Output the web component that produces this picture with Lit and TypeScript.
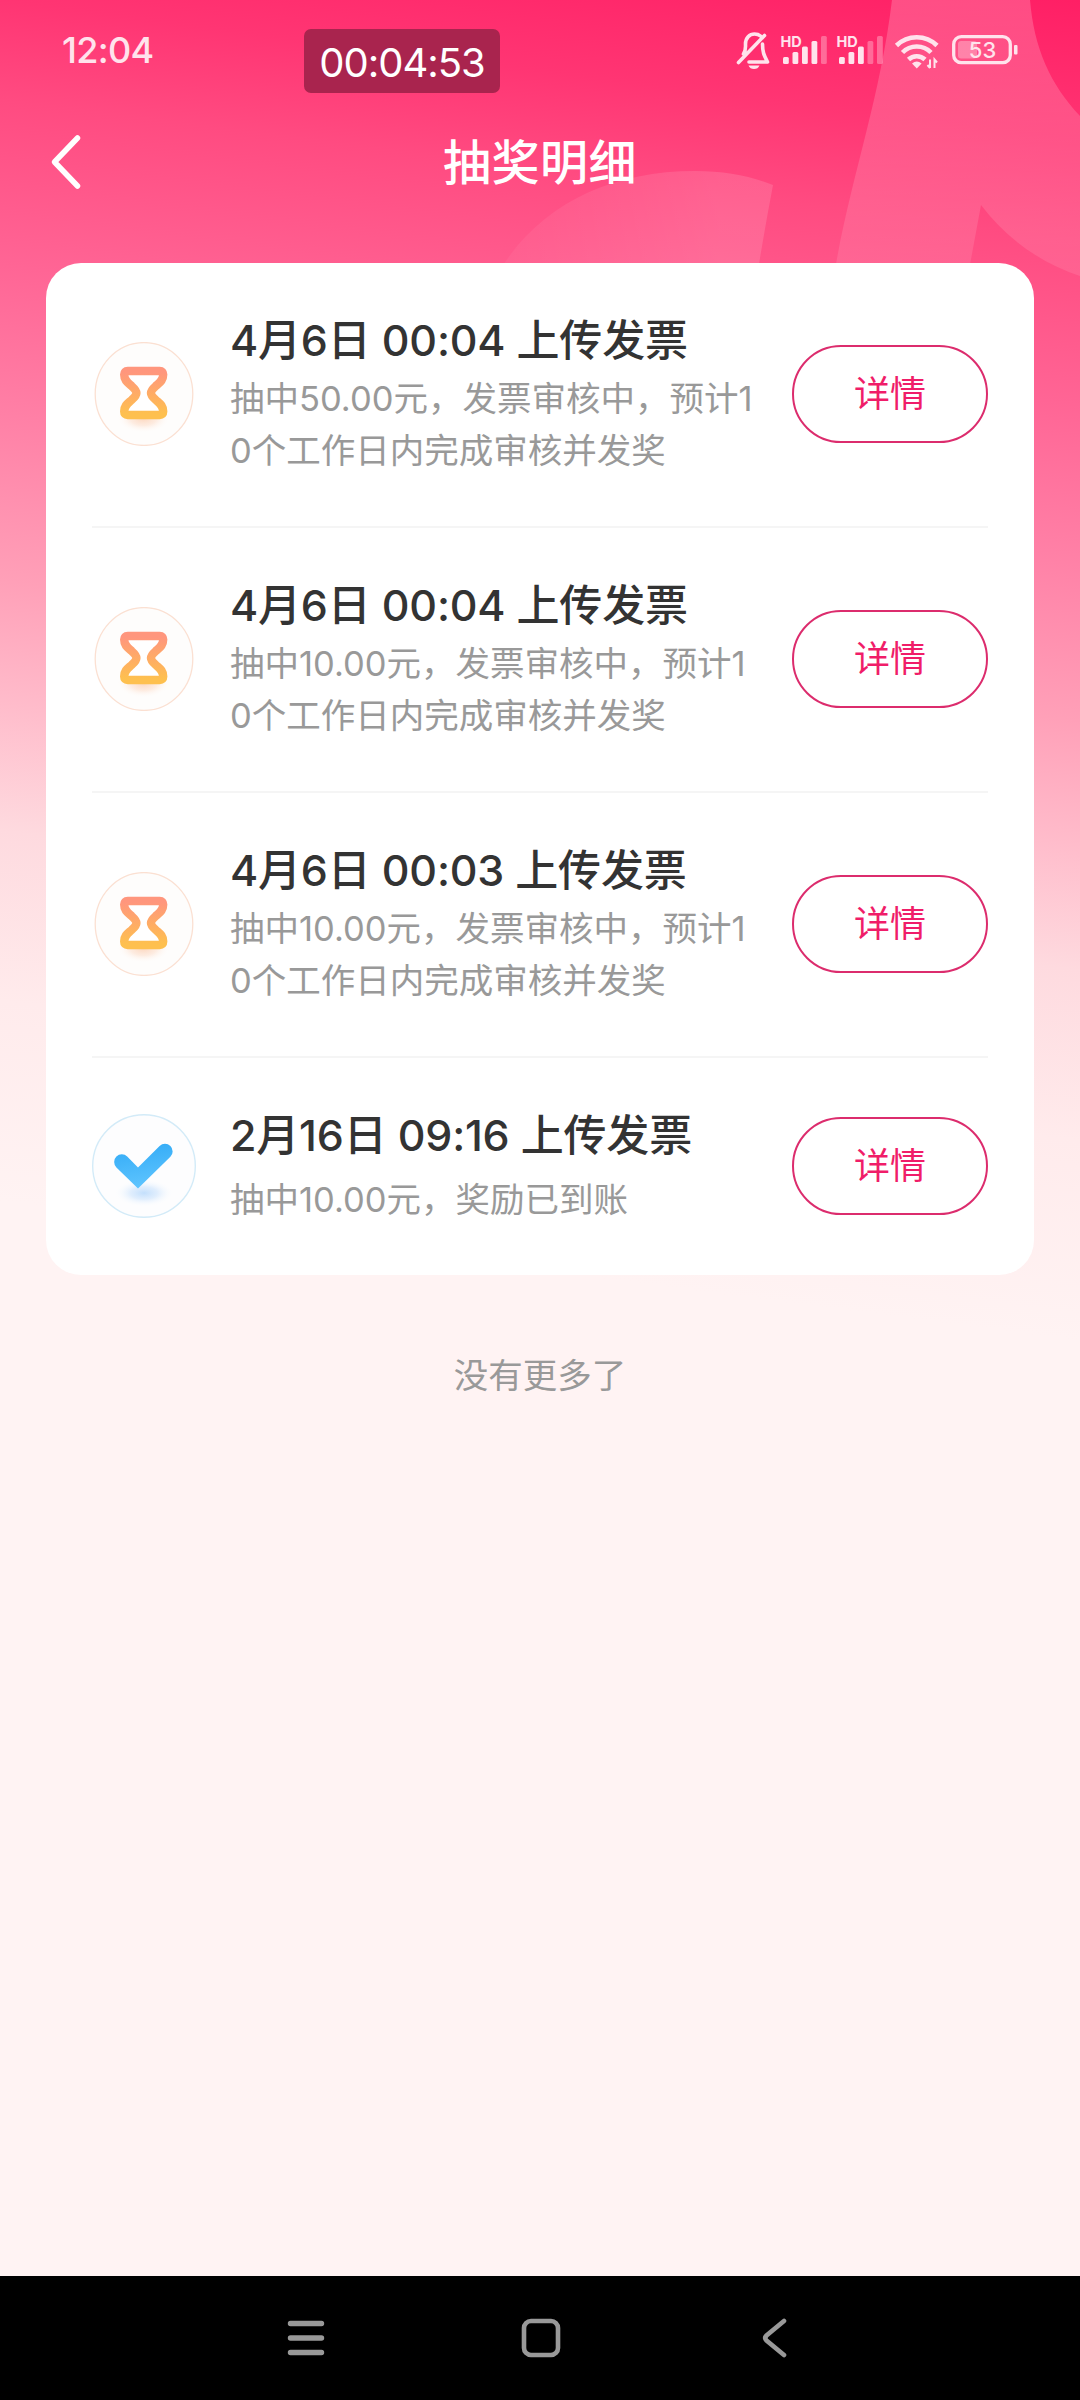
import { LitElement, html, css, svg } from "lit";
import { customElement, property } from "lit/decorators.js";

interface Entry {
  time: string;
  lines: string[];
  status: "pending" | "done";
}

const ENTRIES: Entry[] = [
  { time: "4月6日 00:04 上传发票", lines: ["抽中50.00元，发票审核中，预计1", "0个工作日内完成审核并发奖"], status: "pending" },
  { time: "4月6日 00:04 上传发票", lines: ["抽中10.00元，发票审核中，预计1", "0个工作日内完成审核并发奖"], status: "pending" },
  { time: "4月6日 00:03 上传发票", lines: ["抽中10.00元，发票审核中，预计1", "0个工作日内完成审核并发奖"], status: "pending" },
  { time: "2月16日 09:16 上传发票", lines: ["抽中10.00元，奖励已到账"], status: "done" },
];

@customElement("status-badge")
class StatusBadge extends LitElement {
  @property() kind = "pending";

  static styles = css`
    :host { display: block; width: 104px; height: 104px; }
    svg { display: block; }
  `;

  render() {
    return this.kind === "done"
      ? html`<svg width="104" height="104" viewBox="0 0 104 104">
          <defs>
            <linearGradient id="g" x1="0.3" y1="0" x2="0.5" y2="1">
              <stop offset="0" stop-color="#33abf6" /><stop offset="1" stop-color="#5fc5ff" />
            </linearGradient>
            <radialGradient id="s"><stop offset="0" stop-color="#c3dffc" /><stop offset="0.45" stop-color="#d9eafd" stop-opacity=".8" /><stop offset="1" stop-color="#fff" stop-opacity="0" /></radialGradient>
          </defs>
          <circle cx="52" cy="52" r="51.3" fill="#fdfdfe" stroke="#d3ebf8" stroke-width="1.4" />
          <ellipse cx="52" cy="79" rx="30" ry="14" fill="url(#s)" />
          <path d="M24.4 53.4a7.6 7.6 0 0 1 10.800-10.800L46 53.600 67.600 32a7.600 7.600 0 0 1 10.800 10.800L46 74.600z" fill="url(#g)" />
        </svg>`
      : html`<svg width="104" height="104" viewBox="0 0 104 104">
          <defs>
            <linearGradient id="g" gradientUnits="userSpaceOnUse" x1="0" y1="25" x2="0" y2="77">
              <stop offset="0.1" stop-color="#ff967d" /><stop offset="0.9" stop-color="#fec04f" />
            </linearGradient>
            <radialGradient id="s"><stop offset="0" stop-color="#fcd6bd" /><stop offset="0.5" stop-color="#fde6d8" stop-opacity=".75" /><stop offset="1" stop-color="#fff" stop-opacity="0" /></radialGradient>
          </defs>
          <ellipse cx="52" cy="52" rx="48.8" ry="51.4" fill="#fefdfc" stroke="#fbe0d2" stroke-width="1.3" />
          <ellipse cx="51.5" cy="76" rx="27" ry="15" fill="url(#s)" />
          <path d="M35.700 29H67.700Q71.200 29 71.200 32.500C71.200 39 67 41 63.500 44.300 57.500 49.500 57.500 52.500 63.500 57.700 67 61 71.200 63 71.200 69.500Q71.200 73 67.700 73H35.700Q32.200 73 32.200 69.500C32.200 63 36.400 61 39.900 57.700 45.900 52.500 45.900 49.500 39.900 44.300 36.400 41 32.200 39 32.200 32.500Q32.200 29 35.700 29z"
            fill="#fff" stroke="url(#g)" stroke-width="8.400" stroke-linejoin="round" />
        </svg>`;
  }
}

@customElement("app-root")
export class AppRoot extends LitElement {
  static styles = css`
    :host {
      display: block;
      font-family: Inter, "Noto Sans CJK SC", sans-serif;
      color: #333;
    }
    .screen {
      position: relative;
      display: flex;
      flex-direction: column;
      width: 1080px;
      height: 2400px;
      overflow: hidden;
      background: #fff3f3;
    }
    .backdrop { position: absolute; left: 0; top: 0; }
    .status {
      position: relative;
      display: flex;
      align-items: center;
      height: 100px;
      padding: 0 60px 0 62px;
      box-sizing: border-box;
      color: #ffe3ec;
    }
    .clock { font-size: 36px; font-weight: 500; line-height: 44px; width: 242px; letter-spacing: -0.7px; }
    .timer {
      display: flex;
      align-items: center;
      justify-content: center;
      width: 196px;
      height: 64px;
      margin-top: 22px;
      box-sizing: border-box;
      padding-top: 2px;
      border-radius: 7px;
      background: #a9244e;
      color: #fff;
      font-size: 40px;
      letter-spacing: -1px;
    }
    .indicators { margin-left: auto; display: block; }
    .nav {
      position: relative;
      display: grid;
      grid-template-columns: 96px 1fr 96px;
      align-items: center;
      height: 124px;
      color: #fff;
    }
    .nav svg { display: block; margin-left: 48px; }
    .nav h1 { margin: 2px 0 0; text-align: center; font-size: 48px; font-weight: 500; line-height: 60px; letter-spacing: 0.5px; }
    .card {
      position: relative;
      margin: 39px 46px 0;
      padding: 0 46px;
      border-radius: 35px;
      background: #fff;
      height: 1012px;
      box-sizing: border-box;
    }
    .row {
      display: grid;
      grid-template-columns: 104px 1fr 196px;
      column-gap: 34px;
      align-items: center;
      height: 265px;
      padding-bottom: 2px;
      box-sizing: border-box;
      border-bottom: 2px solid #f5f5f5;
    }
    .row.done { height: 216px; border-bottom: 0; padding: 0; }
    .text { align-self: start; white-space: nowrap; padding-top: 49px; }
    .title { font-size: 43px; font-weight: 450; line-height: 56px; color: #333; letter-spacing: -0.2px; }
    .desc { font-size: 34.500px; line-height: 52px; color: #999; margin-top: 5px; }
    .done .desc { margin-top: 11px; }
    .detail {
      box-sizing: border-box;
      width: 196px;
      height: 98px;
      padding: 0;
      border: 2px solid #dc2c6d;
      border-radius: 49px;
      background: #fff;
      color: #f01d69;
      font: 400 36px/44px Inter, "Noto Sans CJK SC", sans-serif;
    }
    .end { position: relative; margin-top: 75px; text-align: center; font-size: 34.500px; line-height: 52px; color: #999; }
    .system {
      position: relative;
      margin-top: auto;
      height: 124px;
      display: flex;
      align-items: center;
      justify-content: space-between;
      padding: 0 292px 0 286px;
      background: #000;
    }
    .home { margin-right: 5px; }
    .hd { font: 700 14.500px Inter, sans-serif; }
    .pct { font: 500 22px Inter, sans-serif; }
  `;

  private backdrop() {
    return html`<svg class="backdrop" width="1080" height="1400" viewBox="0 0 1080 1400">
      <defs>
        <linearGradient id="v" gradientUnits="userSpaceOnUse" x1="0" y1="-140" x2="-174" y2="1200">
          <stop offset="0" stop-color="#ff1f65" />
          <stop offset=".103" stop-color="#ff3573" />
          <stop offset=".176" stop-color="#ff4b81" />
          <stop offset=".297" stop-color="#ff6595" />
          <stop offset=".407" stop-color="#ff80a6" />
          <stop offset=".529" stop-color="#ffa0b8" />
          <stop offset=".62" stop-color="#ffbccb" />
          <stop offset=".712" stop-color="#fedadf" />
          <stop offset=".837" stop-color="#ffebec" />
          <stop offset=".984" stop-color="#fff3f3" />
        </linearGradient>
        <linearGradient id="o" gradientUnits="userSpaceOnUse" x1="0" y1="0" x2="0" y2="270">
          <stop offset="0" stop-color="#fff" stop-opacity=".2" />
          <stop offset="1" stop-color="#fff" stop-opacity=".1" />
        </linearGradient>
        <linearGradient id="b" gradientUnits="userSpaceOnUse" x1="500" y1="0" x2="720" y2="0">
          <stop offset="0" stop-color="#fff" stop-opacity=".04" />
          <stop offset="1" stop-color="#fff" stop-opacity=".13" />
        </linearGradient>
      </defs>
      <rect width="1080" height="1400" fill="url(#v)" />
      <path d="M500 270C540 205 610 171 695 171c30 0 55 5 78 14q-8 42-15 85z" fill="url(#b)" />
      <path d="M892 0h138c4 48 20 84 50 116v160q-60-20-99-71l-12 65H835C850 180 880 100 892 0z" fill="url(#o)" />
    </svg>`;
  }

  private bars(x: number, lit: number) {
    return [7, 12, 17.500, 23, 28].map(
      (h, i) => svg`<rect x=${x + i * 9.500} y=${37 - h} width="5.800" height=${h} rx="1.500" fill-opacity=${i < lit ? 1 : 0.35} />`
    );
  }

  render() {
    return html`<div class="screen">
      ${this.backdrop()}
      <div class="status">
        <span class="clock">12:04</span>
        <span class="timer">00:04:53</span>
        <svg class="indicators" width="284" height="46" viewBox="0 0 284 46" fill="#ffe3ec">
          <g fill="none" stroke="#ffe3ec" stroke-width="3.600" stroke-linecap="round" stroke-linejoin="round">
            <path d="M2.500 35.500 28.500 8.500M7.500 27c2.500-4 2-6 2-10 0-6 4-10 9-10 2.500 0 4.500.7 6 2M26.500 17c0 9 2 12 5 18H13" />
          </g>
          <path d="M12.500 38.500h11q-1.500 3.500-5.500 3.500t-5.500-3.500z" />
          <text class="hd" x="44.500" y="19.500">HD</text>${this.bars(47, 4)}
          <text class="hd" x="100.500" y="19.500">HD</text>${this.bars(103, 3)}
          <g fill="none" stroke="#ffe3ec" stroke-width="4.600">
            <path d="M160.500 18.500a29 29 0 0 1 40.500 0M166.500 25.500a20 20 0 0 1 28.500 0M172.500 32.500a12 12 0 0 1 16.500 0" />
          </g>
          <path d="M176 36.500q4.800-4 9.600 0l-4.800 5z" />
          <path d="M194 32.500v8.500M191.500 38l2.500 3M198.500 41v-8.500l2.500 3" fill="none" stroke="#ffe3ec" stroke-width="2" />
          <rect x="217.700" y="9.700" width="56.600" height="26" rx="7.500" fill="none" stroke="#ffe3ec" stroke-width="3.300" />
          <rect x="222" y="14" width="19" height="17.500" rx="3" fill-opacity=".35" />
          <rect x="278" y="18" width="3.500" height="9.500" rx="1" />
          <text class="pct" x="246.500" y="31" text-anchor="middle">53</text>
        </svg>
      </div>
      <div class="nav">
        <svg width="34" height="56" viewBox="0 0 34 56" fill="none" stroke="#fff" stroke-width="5.500" stroke-linecap="round" stroke-linejoin="round"><path d="M29.500 4 6.500 28l23 24" /></svg>
        <h1>抽奖明细</h1>
      </div>
      <div class="card">
        ${ENTRIES.map(
          (e) => html`<div class="row ${e.status}">
            <status-badge .kind=${e.status}></status-badge>
            <div class="text">
              <div class="title">${e.time}</div>
              <div class="desc">${e.lines.map((l) => html`<div>${l}</div>`)}</div>
            </div>
            <button class="detail">详情</button>
          </div>`
        )}
      </div>
      <div class="end">没有更多了</div>
      <div class="system">
        <svg width="40" height="46" viewBox="0 0 40 46" stroke="#999" stroke-width="5.400" stroke-linecap="round"><path d="M4.500 8.500h31M4.500 23h31M4.500 37.500h31" /></svg>
        <svg class="home" width="42" height="46" viewBox="0 0 42 46" fill="none" stroke="#999" stroke-width="4.600"><rect x="4" y="6" width="34" height="34" rx="7" /></svg>
        <svg width="28" height="46" viewBox="0 0 28 46" fill="none" stroke="#999" stroke-width="4.600" stroke-linecap="round"><path d="M24 6 6.500 20.500q-2.500 2.500 0 5L24 40" /></svg>
      </div>
    </div>`;
  }
}
